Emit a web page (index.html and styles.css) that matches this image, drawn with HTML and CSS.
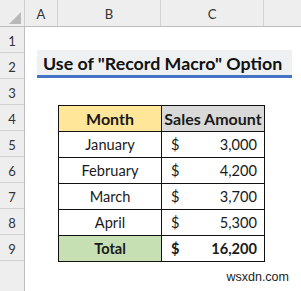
FILE: index.html
```html
<!DOCTYPE html>
<html>
<head>
<meta charset="utf-8">
<link rel="stylesheet" href="styles.css">
</head>
<body>
<div class="sheet">
  <div class="corner"><span class="tri"></span></div>
  <div class="colhead">A</div>
  <div class="colhead">B</div>
  <div class="colhead">C</div>
  <div class="colhead last"></div>

  <div class="rowhead r1">1</div>
  <div class="rowhead r2">2</div>
  <div class="rowhead r3">3</div>
  <div class="rowhead r4">4</div>
  <div class="rowhead r5">5</div>
  <div class="rowhead r6">6</div>
  <div class="rowhead r7">7</div>
  <div class="rowhead r8">8</div>
  <div class="rowhead r9">9</div>
  <div class="rowhead r10"></div>

  <div class="title">Use of "Record Macro" Option</div>

  <table class="data">
    <tr class="head">
      <th class="month">Month</th>
      <th class="sales">Sales Amount</th>
    </tr>
    <tr><td class="name">January</td><td class="amt"><span>$</span><span>3,000</span></td></tr>
    <tr><td class="name">February</td><td class="amt"><span>$</span><span>4,200</span></td></tr>
    <tr><td class="name">March</td><td class="amt"><span>$</span><span>3,700</span></td></tr>
    <tr><td class="name">April</td><td class="amt"><span>$</span><span>5,300</span></td></tr>
    <tr class="total"><td class="name">Total</td><td class="amt"><span>$</span><span>16,200</span></td></tr>
  </table>

  <div class="mark">wsxdn.com</div>
</div>
</body>
</html>
```

FILE: styles.css
```css
html, body {
  margin: 0;
  padding: 0;
  background: #ffffff;
}
.sheet {
  width: 301px;
  height: 291px;
  overflow: hidden;
  display: grid;
  grid-template-columns: 25px 33px 103px 103px 37px;
  grid-template-rows: 27px repeat(9, 26px) 30px;
  font-family: Lato, "Open Sans", sans-serif;
  color: #1a1a1a;
  background: #ffffff;
}
.corner {
  grid-column: 1;
  grid-row: 1;
  background: #eeeeee;
  border-right: 1px solid #cfcfcf;
  border-bottom: 1px solid #bdbdbd;
  position: relative;
  box-sizing: border-box;
}
.tri {
  position: absolute;
  right: 3px;
  bottom: 2px;
  width: 0;
  height: 0;
  border-left: 12px solid transparent;
  border-bottom: 12px solid #b9b9b9;
}
.colhead {
  grid-row: 1;
  background: #eeeeee;
  border-right: 1px solid #d2d2d2;
  border-bottom: 1px solid #bdbdbd;
  box-sizing: border-box;
  display: flex;
  align-items: center;
  justify-content: center;
  font-size: 13px;
  color: #333333;
  padding-top: 2px;
}
.colhead.last {
  border-right: none;
}
.rowhead {
  grid-column: 1;
  background: #eeeeee;
  border-right: 1px solid #bdbdbd;
  border-bottom: 1px solid #d2d2d2;
  box-sizing: border-box;
  display: flex;
  align-items: center;
  justify-content: center;
  font-size: 13px;
  color: #333333;
  padding-top: 2px;
}
.r1 { grid-row: 2; }
.r2 { grid-row: 3; }
.r3 { grid-row: 4; }
.r4 { grid-row: 5; }
.r5 { grid-row: 6; }
.r6 { grid-row: 7; }
.r7 { grid-row: 8; }
.r8 { grid-row: 9; }
.r9 { grid-row: 10; }
.r10 { grid-row: 11; border-bottom: none; }

.title {
  grid-column: 2 / 6;
  grid-row: 2 / 4;
  margin: 23px 9px 1px 12px;
  background: #eef0f2;
  border-bottom: 3px solid #4472c4;
  display: flex;
  align-items: center;
  padding-left: 6px;
  font-weight: 700;
  font-size: 17.8px;
  color: #111111;
  box-sizing: border-box;
  white-space: nowrap;
}

.data {
  grid-column: 3 / 5;
  grid-row: 5 / 11;
  border-collapse: collapse;
  width: 207px;
  height: 157px;
  align-self: start;
  table-layout: fixed;
  font-size: 14.6px;
}
.data th, .data td {
  border: 1px solid #111111;
  height: 25px;
  padding: 0;
  box-sizing: border-box;
  white-space: nowrap;
}
.data th {
  font-weight: 700;
  font-size: 16px;
}
.month {
  background: #ffe699;
}
.sales {
  background: #d9d9d9;
}
.name {
  text-align: center;
}
.amt span:first-child {
  float: left;
  padding-left: 9px;
}
.amt span:last-child {
  float: right;
  padding-right: 7px;
}
.total .name {
  background: #c6e0b4;
  font-weight: 700;
}
.total .amt {
  font-weight: 700;
}
.mark {
  grid-column: 4 / 6;
  grid-row: 11;
  justify-self: end;
  margin-right: 12px;
  margin-top: 9px;
  font-family: "Liberation Sans", Arial, sans-serif;
  font-size: 12.5px;
  color: #222222;
}
```
